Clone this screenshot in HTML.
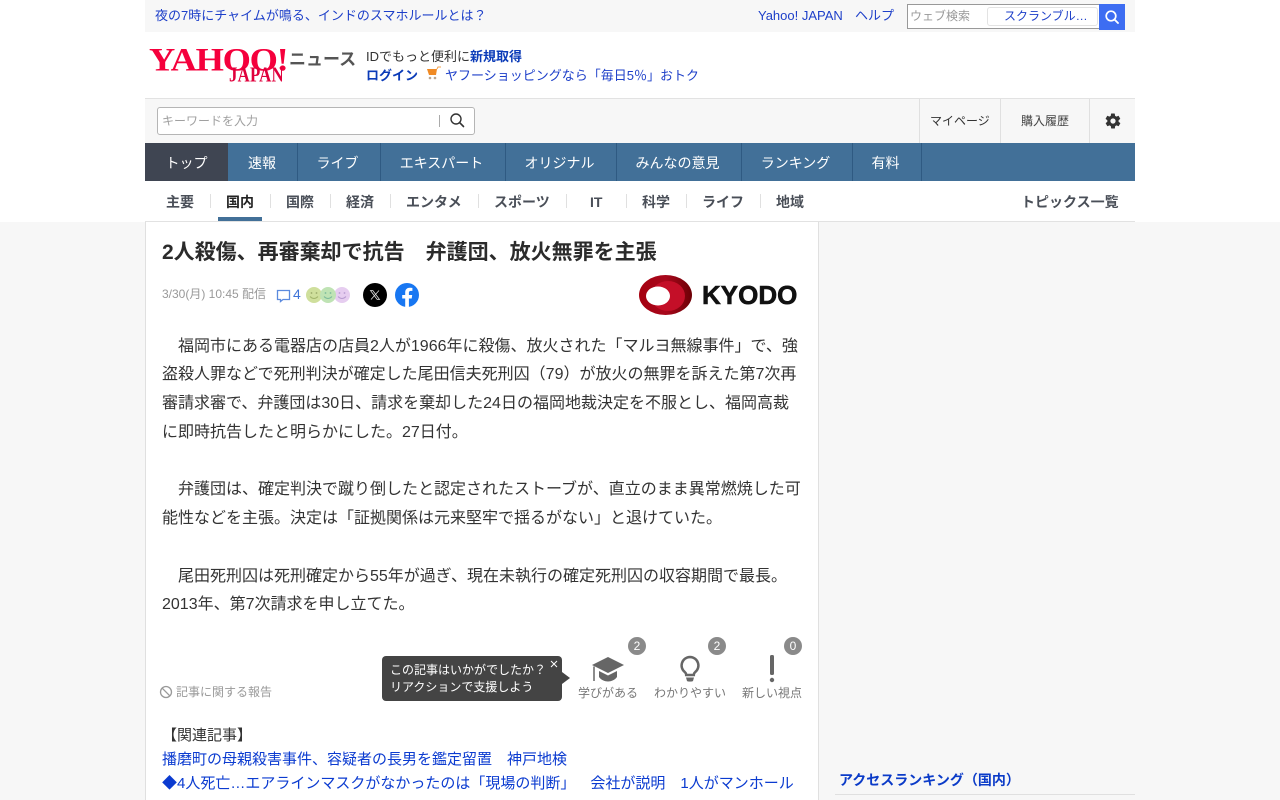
<!DOCTYPE html>
<html lang="ja"><head><meta charset="utf-8"><title>2人殺傷、再審棄却で抗告</title>
<style>
*{box-sizing:border-box}
html,body{margin:0;padding:0;width:1280px;height:800px;overflow:hidden;background:#fff;font-family:"Liberation Sans","WenQuanYi Zen Hei","Noto Sans CJK JP",sans-serif;color:#333;text-spacing-trim:space-all}
.a{position:absolute;white-space:nowrap}
a{color:#0b3bd0;text-decoration:none}
.bl{color:#1d3fc9}
.nav{position:absolute;top:143px;height:38px;line-height:40px;text-align:center;color:#fff;font-size:14px;border-right:1px solid #2f5a82;padding-right:3px}
.sub{position:absolute;top:193px;height:19px;line-height:19px;text-align:center;font-size:14px;font-weight:bold;color:#4a4f58}
.sep{position:absolute;top:194px;width:1px;height:14px;background:#e0e0e0}
.p{position:absolute;left:162px;font-size:16px;line-height:28.8px;color:#333;white-space:nowrap}
.badge{position:absolute;width:18px;height:18px;border-radius:50%;background:#8a8a8a;color:#fff;font-size:12px;line-height:18px;text-align:center}
.rl{position:absolute;top:685px;font-size:12px;line-height:16px;color:#777;white-space:nowrap}
</style></head><body>
<div class="a" style="left:0;top:222px;width:1280px;height:578px;background:#f7f7f7"></div>
<div class="a" style="left:145px;top:0;width:990px;height:32px;background:#f7f7f7"></div>
<a class="a bl" style="left:155px;top:7px;font-size:13px;line-height:17px">夜の7時にチャイムが鳴る、インドのスマホルールとは？</a>
<a class="a bl" style="left:758px;top:7px;font-size:13px;line-height:17px">Yahoo! JAPAN</a>
<a class="a bl" style="left:855px;top:7px;font-size:13px;line-height:17px">ヘルプ</a>
<div class="a" style="left:907px;top:4px;width:193px;height:25px;border:1px solid #999;background:#fff"></div>
<div class="a" style="left:910px;top:8px;font-size:12px;line-height:16px;color:#999">ウェブ検索</div>
<div class="a" style="left:987px;top:7px;width:111px;height:19px;border:1px solid #e3e3e3;border-radius:3px;background:#fff"></div>
<div class="a bl" style="left:1004px;top:8px;font-size:12px;line-height:16px">スクランブル…</div>
<div class="a" style="left:1099px;top:4px;width:26px;height:26px;background:#3d6df2"></div>
<svg class="a" style="left:1104px;top:9px" width="16" height="16" viewBox="0 0 16 16"><circle cx="7" cy="7" r="4.8" fill="none" stroke="#fff" stroke-width="1.7"/><path d="M10.5 10.5L14 14" stroke="#fff" stroke-width="1.9" stroke-linecap="round"/></svg>

<div class="a" style="left:149px;top:45px;font-family:'Liberation Serif',serif;font-weight:bold;font-size:34px;line-height:34px;color:#f5003c;letter-spacing:-1.2px;transform:scale(1.07,.95);transform-origin:0 0">YAHOO!</div>
<div class="a" style="left:229px;top:65.500px;font-family:'Liberation Serif',serif;font-weight:bold;font-size:16px;line-height:16px;color:#e0003c;letter-spacing:.2px;transform:scale(1.05,1.3);transform-origin:0 0">JAPAN</div>
<div class="a" style="left:289px;top:50px;font-size:17px;line-height:20px;font-weight:bold;color:#555">ニュース</div>
<div class="a" style="left:366px;top:48px;font-size:13px;line-height:18px;color:#333">IDでもっと便利に<a style="font-weight:bold;color:#0b3bb8">新規取得</a></div>
<a class="a" style="left:366px;top:67px;font-size:13px;line-height:18px;font-weight:bold;color:#0b3bb8">ログイン</a>
<svg class="a" style="left:426px;top:66px" width="16" height="15" viewBox="0 0 16 15"><path d="M1 3h10l-1 6H3z" fill="#f08a24"/><path d="M11 3l1-2h3" stroke="#f4a04a" stroke-width="1" fill="none"/><circle cx="4" cy="12" r="1.3" fill="#b9a58f"/><circle cx="9" cy="12" r="1.3" fill="#b9a58f"/></svg>
<a class="a bl" style="left:445px;top:67px;font-size:13px;line-height:18px">ヤフーショッピングなら「毎日5％」おトク</a>

<div class="a" style="left:145px;top:98px;width:990px;height:45px;background:#f7f7f7;border-top:1px solid #e2e2e2"></div>
<div class="a" style="left:157px;top:107px;width:318px;height:28px;background:#fff;border:1px solid #b5b5b5;border-radius:3px"></div>
<div class="a" style="left:162px;top:113px;font-size:12px;line-height:17px;color:#a0a0a0">キーワードを入力</div>
<div class="a" style="left:439px;top:115px;width:1px;height:12px;background:#aaa"></div>
<svg class="a" style="left:449px;top:112px" width="16" height="16" viewBox="0 0 16 16"><circle cx="7" cy="7" r="5" fill="none" stroke="#333" stroke-width="1.4"/><path d="M10.6 10.6L14.5 14.5" stroke="#333" stroke-width="1.6" stroke-linecap="round"/></svg>
<div class="a" style="left:919px;top:99px;width:1px;height:44px;background:#e0e0e0"></div>
<div class="a" style="left:1000px;top:99px;width:1px;height:44px;background:#e0e0e0"></div>
<div class="a" style="left:1089px;top:99px;width:1px;height:44px;background:#e0e0e0"></div>
<div class="a" style="left:930px;top:113px;font-size:12px;line-height:17px;color:#333">マイページ</div>
<div class="a" style="left:1021px;top:113px;font-size:12px;line-height:17px;color:#444">購入履歴</div>
<svg class="a" style="left:1104px;top:112px" width="18" height="18" viewBox="0 0 24 24"><path fill="#333" d="M19.4 13c.1-.3.1-.7.1-1s0-.7-.1-1l2.1-1.6c.2-.1.2-.4.1-.6l-2-3.5c-.1-.2-.4-.3-.6-.2l-2.5 1c-.5-.4-1.1-.7-1.7-1l-.4-2.6c0-.3-.2-.5-.5-.5h-4c-.3 0-.5.2-.5.4l-.4 2.7c-.6.2-1.2.6-1.7 1l-2.5-1c-.2-.1-.5 0-.6.2l-2 3.5c-.1.2-.1.5.1.6L4.5 11c0 .3-.1.7-.1 1s0 .7.1 1l-2.1 1.6c-.2.1-.2.4-.1.6l2 3.5c.1.2.4.3.6.2l2.5-1c.5.4 1.1.7 1.7 1l.4 2.6c0 .3.2.5.5.5h4c.3 0 .5-.2.5-.4l.4-2.7c.6-.2 1.2-.6 1.7-1l2.5 1c.2.1.5 0 .6-.2l2-3.5c.1-.2.1-.5-.1-.6zM12 15.500a3.500 3.500 0 1 1 0-7 3.500 3.500 0 0 1 0 7z"/></svg>

<div class="a" style="left:145px;top:143px;width:990px;height:38px;background:#427098"></div>
<div class="nav" style="left:145px;width:83px;background:#3f4552;border:0;padding:0">トップ</div>
<div class="nav" style="left:228px;width:70px;padding-right:1px">速報</div>
<div class="nav" style="left:298px;width:83px">ライブ</div>
<div class="nav" style="left:381px;width:125px">エキスパート</div>
<div class="nav" style="left:506px;width:111px">オリジナル</div>
<div class="nav" style="left:617px;width:125px">みんなの意見</div>
<div class="nav" style="left:742px;width:111px">ランキング</div>
<div class="nav" style="left:853px;width:69px">有料</div>

<div class="sub" style="left:166px">主要</div><div class="sep" style="left:210px"></div>
<div class="sub" style="left:226px;color:#222">国内</div><div class="sep" style="left:270px"></div>
<div class="sub" style="left:286px">国際</div><div class="sep" style="left:330px"></div>
<div class="sub" style="left:346px">経済</div><div class="sep" style="left:390px"></div>
<div class="sub" style="left:406px">エンタメ</div><div class="sep" style="left:478px"></div>
<div class="sub" style="left:494px">スポーツ</div><div class="sep" style="left:566px"></div>
<div class="sub" style="left:590px">IT</div><div class="sep" style="left:626px"></div>
<div class="sub" style="left:642px">科学</div><div class="sep" style="left:686px"></div>
<div class="sub" style="left:702px">ライフ</div><div class="sep" style="left:760px"></div>
<div class="sub" style="left:776px">地域</div>
<div class="sub" style="left:1021px">トピックス一覧</div>
<div class="a" style="left:218px;top:217px;width:44px;height:4px;background:#427098"></div>
<div class="a" style="left:145px;top:221px;width:990px;height:1px;background:#e2e2e2"></div>

<div class="a" style="left:145px;top:222px;width:674px;height:578px;background:#fff;border-left:1px solid #e0e0e0;border-right:1px solid #e0e0e0"></div>
<div class="a" style="left:162px;top:238px;font-size:21px;line-height:30px;font-weight:bold;color:#2b2b2b">2人殺傷、再審棄却で抗告　弁護団、放火無罪を主張</div>
<div class="a" style="left:162px;top:286px;font-size:12px;line-height:16px;color:#999">3/30(月) 10:45 配信</div>
<svg class="a" style="left:276px;top:289px" width="15" height="14" viewBox="0 0 15 14"><path d="M1.500 1.500h12v9H7l-2.500 2v-2h-3z" fill="none" stroke="#5b8ade" stroke-width="1.300"/></svg>
<a class="a" style="left:293px;top:285px;font-size:14px;line-height:18px;color:#3f74d8">4</a>
<svg class="a" style="left:305px;top:286px" width="46" height="18" viewBox="0 0 46 18"><circle cx="9" cy="9" r="8" fill="#cfdf9c"/><circle cx="37" cy="9" r="8" fill="#e6cdf0"/><circle cx="23" cy="9" r="8" fill="#bfe3b4"/><g fill="none" stroke-width="1"><path d="M5 10.500q4 4 8 0" stroke="#a3b56c"/><path d="M19 10.500q4 4 8 0" stroke="#7dbb9b"/><path d="M33 10.500q4 4 8 0" stroke="#b79bd0"/></g><g fill="#9aa96a"><circle cx="6.500" cy="7" r=".9"/><circle cx="11.500" cy="7" r=".9"/></g><g fill="#7dbb9b"><circle cx="20.500" cy="7" r=".9"/><circle cx="25.500" cy="7" r=".9"/></g><g fill="#b79bd0"><circle cx="34.500" cy="7" r=".9"/><circle cx="39.500" cy="7" r=".9"/></g></svg>
<svg class="a" style="left:363px;top:283px" width="24" height="24" viewBox="0 0 24 24"><circle cx="12" cy="12" r="12" fill="#000"/><path d="M7.500 7.500h2.300l6.700 9h-2.300zM16 7.500L8 16.500" stroke="#ddd" stroke-width=".8" fill="none"/></svg>
<svg class="a" style="left:395px;top:283px" width="24" height="24" viewBox="0 0 24 24"><circle cx="12" cy="12" r="12" fill="#1877f2"/><path fill="#fff" d="M16.700 15.500l.5-3.500h-3.300V9.800c0-1 .5-1.900 2-1.900h1.500v-3S16 4.700 14.700 4.700c-2.700 0-4.500 1.700-4.500 4.600V12h-3v3.500h3V24h3.700v-8.500z"/></svg>
<svg class="a" style="left:638px;top:274px" width="56" height="42" viewBox="0 0 56 42"><defs><linearGradient id="g" x1="0" x2="1" y1="0" y2="0"><stop offset="0" stop-color="#a5000f"/><stop offset=".5" stop-color="#a8081c"/><stop offset="1" stop-color="#6d0006"/></linearGradient></defs><ellipse cx="27.500" cy="21" rx="26.500" ry="20" fill="url(#g)"/><ellipse cx="30" cy="22" rx="17" ry="15" fill="#c40f28"/><ellipse cx="20" cy="22" rx="12" ry="9.500" fill="#fff"/></svg>
<div class="a" style="left:702px;top:279px;font-size:26px;line-height:32px;font-weight:bold;color:#111;letter-spacing:0;-webkit-text-stroke:.6px #111">KYODO</div>

<div class="p" style="top:332.500px">　福岡市にある電器店の店員2人が1966年に殺傷、放火された「マルヨ無線事件」で、強<br>盗殺人罪などで死刑判決が確定した尾田信夫死刑囚（79）が放火の無罪を訴えた第7次再<br>審請求審で、弁護団は30日、請求を棄却した24日の福岡地裁決定を不服とし、福岡高裁<br>に即時抗告したと明らかにした。27日付。</div>
<div class="p" style="top:476px">　弁護団は、確定判決で蹴り倒したと認定されたストーブが、直立のまま異常燃焼した可<br>能性などを主張。決定は「証拠関係は元来堅牢で揺るがない」と退けていた。</div>
<div class="p" style="top:562.500px">　尾田死刑囚は死刑確定から55年が過ぎ、現在未執行の確定死刑囚の収容期間で最長。<br>2013年、第7次請求を申し立てた。</div>

<svg class="a" style="left:159px;top:685px" width="14" height="14" viewBox="0 0 14 14"><circle cx="7" cy="7" r="5.500" fill="none" stroke="#999" stroke-width="1.300"/><path d="M3.200 3.200l7.600 7.600" stroke="#999" stroke-width="1.300"/></svg>
<div class="a" style="left:176px;top:684px;font-size:12px;line-height:16px;color:#999">記事に関する報告</div>

<div class="a" style="left:382px;top:656px;width:180px;height:45px;background:#444;border-radius:4px"></div>
<div class="a" style="left:562px;top:672px;width:0;height:0;border-left:8px solid #444;border-top:6px solid transparent;border-bottom:6px solid transparent"></div>
<div class="a" style="left:390px;top:662px;font-size:12px;line-height:17px;color:#fff">この記事はいかがでしたか？<br>リアクションで支援しよう</div>
<svg class="a" style="left:550px;top:660px" width="8" height="8" viewBox="0 0 8 8"><path d="M1 1l6 6M7 1L1 7" stroke="#fff" stroke-width="1"/></svg>

<svg class="a" style="left:592px;top:657px" width="32" height="27" viewBox="0 0 32 27"><path d="M16 0L32 8 16 16 0 8z" fill="#666"/><path d="M7 14l9 4.500 9-4.500v6c-2 3-6 4.500-9 4.500s-7-1.500-9-4.500z" fill="#666"/><path d="M2 9.500V24" stroke="#666" stroke-width="1.500"/></svg>
<svg class="a" style="left:679px;top:655px" width="22" height="30" viewBox="0 0 22 30"><path d="M11 2a8.500 8.500 0 0 0-5 15.300c.8.700 1.200 1.700 1.200 2.700h7.600c0-1 .4-2 1.200-2.700A8.500 8.500 0 0 0 11 2z" fill="none" stroke="#666" stroke-width="2.500"/><path d="M7 22.500h8l-1 3.500c-.5.800-5.500.800-6 0z" fill="#666"/></svg>
<svg class="a" style="left:767px;top:654px" width="10" height="30" viewBox="0 0 10 30"><rect x="3" y="1" width="4" height="20" rx="1.600" fill="#666"/><circle cx="5" cy="26" r="2.200" fill="#666"/></svg>
<div class="badge" style="left:628px;top:637px">2</div>
<div class="badge" style="left:708px;top:637px">2</div>
<div class="badge" style="left:784px;top:637px">0</div>
<div class="rl" style="left:578px">学びがある</div>
<div class="rl" style="left:654px">わかりやすい</div>
<div class="rl" style="left:742px">新しい視点</div>

<div class="a" style="left:162px;top:724px;font-size:15px;line-height:24px;color:#333">【関連記事】</div>
<a class="a" style="left:162px;top:748px;font-size:15px;line-height:24px;color:#0b3bd0">播磨町の母親殺害事件、容疑者の長男を鑑定留置　神戸地検</a>
<a class="a" style="left:162px;top:772px;font-size:15px;line-height:24px;color:#0b3bd0">◆4人死亡…エアラインマスクがなかったのは「現場の判断」　会社が説明　1人がマンホール</a>

<a class="a" style="left:839px;top:771px;font-size:14px;line-height:18px;font-weight:bold;color:#0b3bc8">アクセスランキング（国内）</a>
<div class="a" style="left:835px;top:794px;width:300px;height:1px;background:#e0e0e0"></div>
</body></html>
